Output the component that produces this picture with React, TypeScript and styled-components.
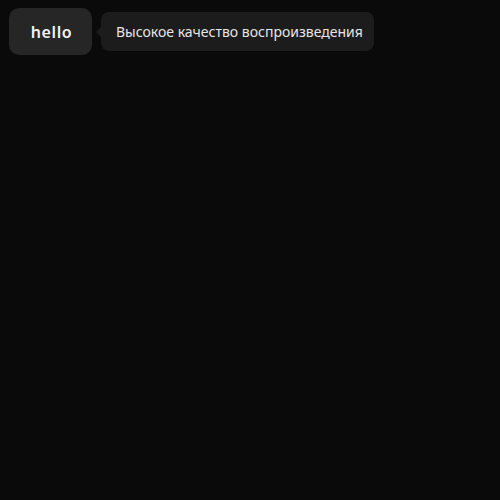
import React from "react";
import styled, { createGlobalStyle } from "styled-components";

const GlobalStyle = createGlobalStyle`
  html, body {
    margin: 0;
    padding: 0;
    background: #0a0a0a;
  }
  body {
    font-family: "Noto Sans", "DejaVu Sans", sans-serif;
  }
`;

const Page = styled.div`
  min-height: 100vh;
  padding: 8px 9px;
  box-sizing: border-box;
`;

const Row = styled.div`
  display: flex;
  align-items: center;
  gap: 9px;
`;

const Trigger = styled.button`
  width: 83px;
  height: 47px;
  border: none;
  border-radius: 10px;
  background: #262626;
  color: #f2f2f2;
  font-family: "Noto Sans", sans-serif;
  font-weight: 600;
  font-size: 16px;
  letter-spacing: 0.6px;
  padding: 0 0 0 2px;
  cursor: pointer;
`;

const Tooltip = styled.div`
  position: relative;
  height: 39px;
  box-sizing: border-box;
  padding: 0 11px 0 15px;
  display: flex;
  align-items: center;
  white-space: nowrap;
  border-radius: 8px;
  background: #1c1c1c;
  color: #e6e6e6;
  font-size: 14px;

  &::before {
    content: "";
    position: absolute;
    left: -5px;
    top: 50%;
    margin-top: -5px;
    border-style: solid;
    border-width: 5px 5px 5px 0;
    border-color: transparent #1c1c1c transparent transparent;
  }
`;

export default function App() {
  return (
    <>
      <GlobalStyle />
      <Page>
        <Row>
          <Trigger>hello</Trigger>
          <Tooltip>Высокое качество воспроизведения</Tooltip>
        </Row>
      </Page>
    </>
  );
}
